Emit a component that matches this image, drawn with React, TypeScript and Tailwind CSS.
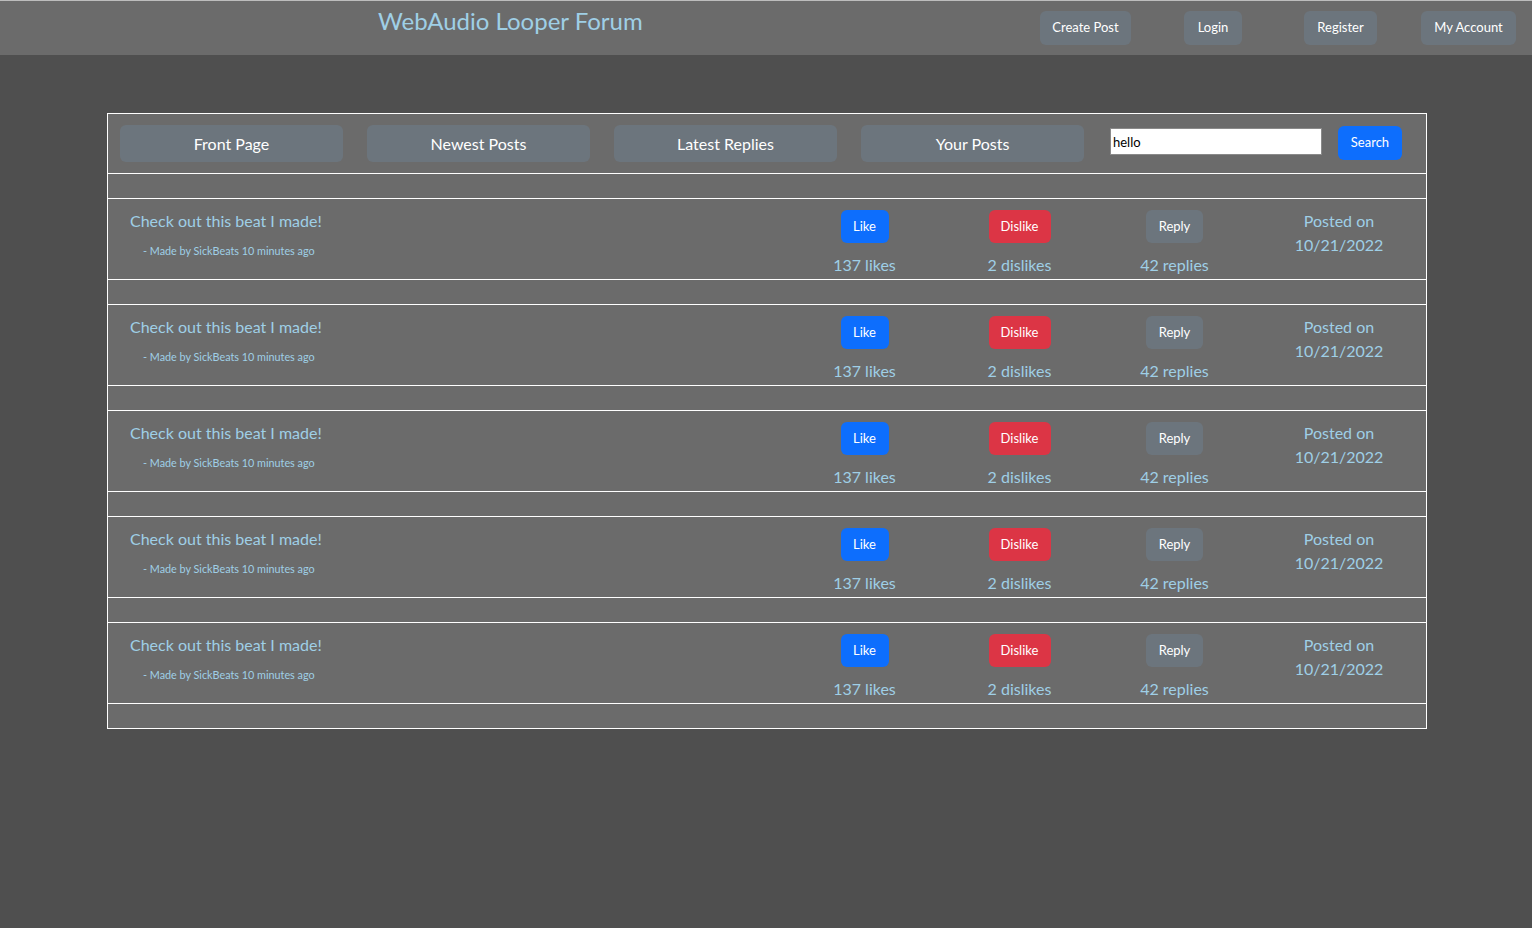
import React from "react";

const font = { fontFamily: "Lato, 'Noto Sans', sans-serif" };

function HeaderBtn({ label, className }: { label: string; className?: string }) {
  return (
    <button
      className={
        "h-[34px] whitespace-nowrap rounded-[6px] bg-[#6c757d] text-[13px] text-white " + (className ?? "")
      }
    >
      {label}
    </button>
  );
}

function NavBtn({ label }: { label: string }) {
  return (
    <button className="h-[37px] w-[223px] rounded-[6px] bg-[#6c757d] text-[16px] text-white">
      {label}
    </button>
  );
}

function Spacer() {
  return <div className="h-[25px] border-b border-white" />;
}

function Post() {
  return (
    <div className="flex h-[81px] border-b border-white">
      <div className="w-[679px] pl-[22px] pt-[10px]">
        <div className="text-[16px] leading-[24px] text-[#9fcfe6]">Check out this beat I made!</div>
        <div className="mt-[10px] pl-[13px] text-[10.8px] leading-[16px] text-[#9fcfe6]">
          - Made by SickBeats 10 minutes ago
        </div>
      </div>
      <div className="flex w-[155px] flex-col items-center pt-[11px]">
        <button className="h-[33px] w-[48px] rounded-[6px] bg-[#0d6efd] text-[13px] text-white">Like</button>
        <div className="mt-[10px] text-[16px] leading-[24px] text-[#9fcfe6]">137 likes</div>
      </div>
      <div className="flex w-[155px] flex-col items-center pt-[11px]">
        <button className="h-[33px] w-[62px] rounded-[6px] bg-[#dc3545] text-[13px] text-white">Dislike</button>
        <div className="mt-[10px] text-[16px] leading-[24px] text-[#9fcfe6]">2 dislikes</div>
      </div>
      <div className="flex w-[155px] flex-col items-center pt-[11px]">
        <button className="h-[33px] w-[57px] rounded-[6px] bg-[#6c757d] text-[13px] text-white">Reply</button>
        <div className="mt-[10px] text-[16px] leading-[24px] text-[#9fcfe6]">42 replies</div>
      </div>
      <div className="flex flex-1 flex-col items-center pt-[10px] text-[16px] leading-[24px] text-[#9fcfe6]">
        <div>Posted on</div>
        <div>10/21/2022</div>
      </div>
    </div>
  );
}

export default function App() {
  return (
    <div className="min-h-screen bg-[#4f4f4f]" style={font}>
      <div className="flex h-[55px] border-t border-[#bdbdbd] bg-[#6b6b6b]">
        <div className="ml-[378px] pt-[2px] text-[24px] leading-[36px] text-[#9fcfe6]">
          WebAudio Looper Forum
        </div>
        <div className="ml-auto flex items-start pt-[10px] pr-[16px]">
          <HeaderBtn label="Create Post" className="w-[91px]" />
          <HeaderBtn label="Login" className="ml-[53px] w-[58px]" />
          <HeaderBtn label="Register" className="ml-[62px] w-[73px]" />
          <HeaderBtn label="My Account" className="ml-[44px] w-[95px]" />
        </div>
      </div>
      <div className="ml-[107px] mt-[58px] w-[1320px] border border-b-0 border-white bg-[#6b6b6b]">
        <div className="flex h-[60px] items-start border-b border-white pl-[12px] pt-[11px]">
          <div className="flex gap-[24px]">
            <NavBtn label="Front Page" />
            <NavBtn label="Newest Posts" />
            <NavBtn label="Latest Replies" />
            <NavBtn label="Your Posts" />
          </div>
          <input
            defaultValue="hello"
            className="ml-[26px] mt-[3px] h-[27px] w-[212px] border border-[#8a8a8a] bg-white px-[2px] text-[13px] text-black outline-none"
          />
          <button className="ml-[16px] mt-[1px] h-[34px] w-[64px] rounded-[6px] bg-[#0d6efd] text-[13px] text-white">
            Search
          </button>
        </div>
        <Spacer />
        <Post />
        <Spacer />
        <Post />
        <Spacer />
        <Post />
        <Spacer />
        <Post />
        <Spacer />
        <Post />
        <Spacer />
      </div>
    </div>
  );
}
